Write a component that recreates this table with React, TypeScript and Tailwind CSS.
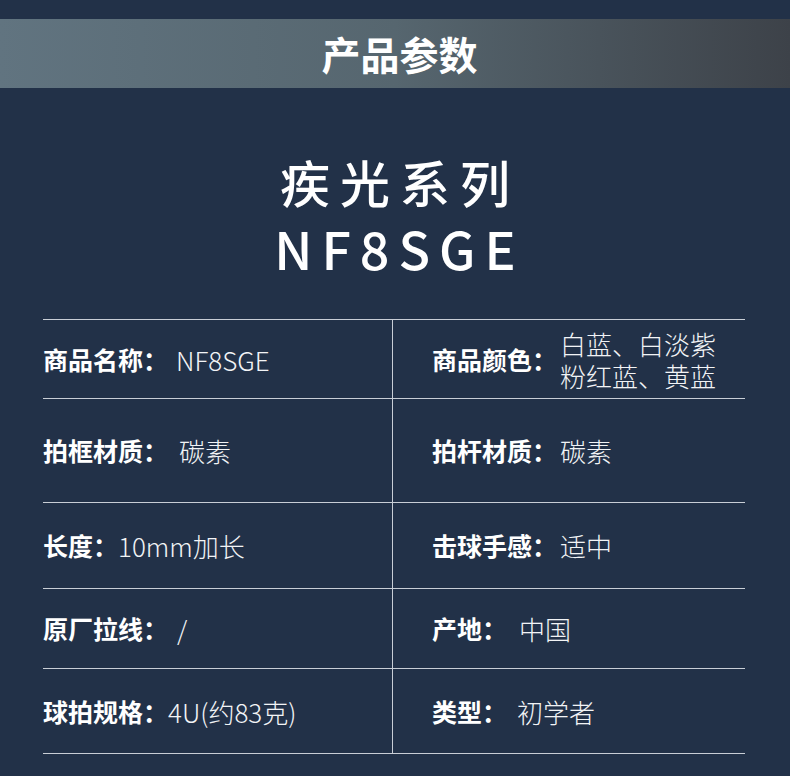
const font = { fontFamily: '"Noto Sans CJK SC", "Noto Sans", sans-serif' };

interface Cell {
  label: string;
  value: string[];
  gap: number;
}

interface Row {
  height: string;
  left: Cell;
  right: Cell;
}

const rows: Row[] = [
  {
    height: "h-[79px]",
    left: { label: "商品名称：", value: ["NF8SGE"], gap: 8 },
    right: { label: "商品颜色：", value: ["白蓝、白淡紫", "粉红蓝、黄蓝"], gap: 3 },
  },
  {
    height: "h-[104px]",
    left: { label: "拍框材质：", value: ["碳素"], gap: 11 },
    right: { label: "拍杆材质：", value: ["碳素"], gap: 3 },
  },
  {
    height: "h-[86px]",
    left: { label: "长度：", value: ["10mm加长"], gap: 0 },
    right: { label: "击球手感：", value: ["适中"], gap: 3 },
  },
  {
    height: "h-[80px]",
    left: { label: "原厂拉线：", value: ["/"], gap: 9 },
    right: { label: "产地：", value: ["中国"], gap: 12 },
  },
  {
    height: "h-[85px]",
    left: { label: "球拍规格：", value: ["4U(约83克)"], gap: 0 },
    right: { label: "类型：", value: ["初学者"], gap: 10 },
  },
];

function SpecCell({ cell, right }: { cell: Cell; right?: boolean }) {
  return (
    <div
      className={`flex items-center h-full border-b border-[#c9ced6] ${
        right ? "pl-[39px]" : "border-r"
      }`}
    >
      <span className="text-[25px] font-bold text-white leading-none whitespace-nowrap">
        {cell.label}
      </span>
      <div
        className="flex flex-col gap-[1px] text-[26px] font-light text-[#f2f4f6] leading-[31px] whitespace-nowrap"
        style={{ marginLeft: cell.gap }}
      >
        {cell.value.map((line) => (
          <span key={line}>{line}</span>
        ))}
      </div>
    </div>
  );
}

export default function App() {
  return (
    <div className="w-[790px] h-[776px] bg-[#223148] overflow-hidden" style={font}>
      <div className="h-[19px]" />
      <div className="h-[69px] flex items-center justify-center bg-gradient-to-r from-[#617480] via-[#56666f] to-[#3d4249]">
        <h1 className="text-[39px] font-bold text-white pl-[9px]">产品参数</h1>
      </div>

      <div className="flex flex-col items-center pt-[68px]">
        <div className="text-[50px] leading-[50px] text-white font-medium tracking-[10px] pl-[10px]">
          疾光系列
        </div>
        <div className="text-[52px] leading-[52px] text-white font-medium tracking-[9px] pl-[9px] mt-[16px]">
          NF8SGE
        </div>
      </div>

      <div className="ml-[43px] mr-[45px] mt-[45px] border-t border-[#c9ced6]">
        {rows.map((row, i) => (
          <div key={i} className={`grid grid-cols-[350px_1fr] ${row.height}`}>
            <SpecCell cell={row.left} />
            <SpecCell cell={row.right} right />
          </div>
        ))}
      </div>
    </div>
  );
}
